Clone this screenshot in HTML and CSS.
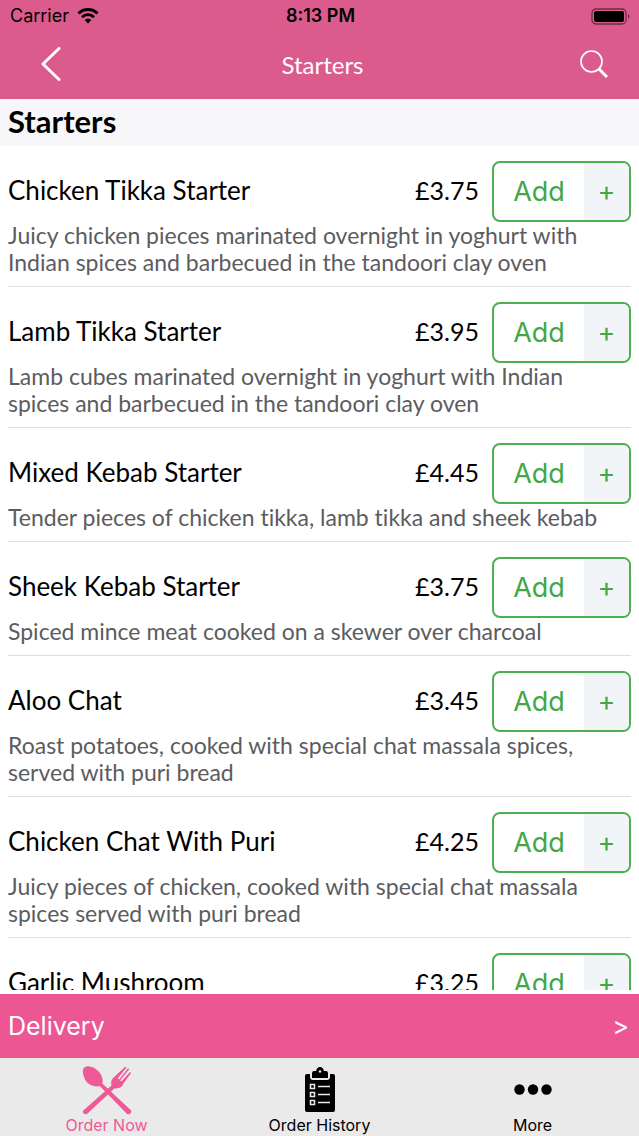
FILE: index.html
```html
<!DOCTYPE html>
<html lang="en">
<head>
  <meta charset="UTF-8">
  <meta name="viewport" content="width=device-width, initial-scale=1.0">
  <title>Starters</title>
  <link rel="stylesheet" href="styles.css">
</head>
<body>
  <header class="top">
    <div class="status">
      <div class="carrier">
        <span>Carrier</span>
        <svg width="22" height="16" viewBox="0 0 22 16">
          <path d="M1.500 5.500a13.500 13.500 0 0 1 19 0" fill="none" stroke="#000" stroke-width="3"/>
          <path d="M5 9.200a8.500 8.500 0 0 1 12 0" fill="none" stroke="#000" stroke-width="2.800"/>
          <path d="M7.700 12a4.700 4.700 0 0 1 6.600 0L11 15.500z"/>
        </svg>
      </div>
      <span class="time">8:13 PM</span>
      <svg class="battery" width="40" height="17" viewBox="0 0 40 17">
        <rect x="1" y="1" width="34" height="15" rx="4" fill="none" stroke="#000" stroke-opacity=".5" stroke-width="1.300"/>
        <rect x="3" y="3" width="30" height="11" rx="2"/>
        <path d="M37 6q3 2.500 0 5z" fill-opacity=".5"/>
      </svg>
    </div>
    <nav class="nav">
      <button class="nav-button" aria-label="Back">
        <svg width="20" height="34" viewBox="0 0 20 34"><path d="M18 1.500 2 17l16 15.500" fill="none" stroke="#fff" stroke-width="3" stroke-linecap="round" stroke-linejoin="round"/></svg>
      </button>
      <span class="nav-title">Starters</span>
      <button class="nav-button" aria-label="Search">
        <svg width="28" height="28" viewBox="0 0 28 28" fill="none" stroke="#fff">
          <circle cx="11.500" cy="11.500" r="10.500" stroke-width="1.700"/>
          <path d="m18.500 18.500 8.500 8.500" stroke-width="3"/>
        </svg>
      </button>
    </nav>
  </header>

  <main class="menu">
    <h1>Starters</h1>
    <ul class="items">
      <li>
        <div class="row">
          <h2>Chicken Tikka Starter</h2>
          <span class="price">£3.75</span>
          <button class="add"><span>Add</span><span class="plus">+</span></button>
        </div>
        <p>Juicy chicken pieces marinated overnight in yoghurt with<br>Indian spices and barbecued in the tandoori clay oven</p>
      </li>
      <li>
        <div class="row">
          <h2>Lamb Tikka Starter</h2>
          <span class="price">£3.95</span>
          <button class="add"><span>Add</span><span class="plus">+</span></button>
        </div>
        <p>Lamb cubes marinated overnight in yoghurt with Indian<br>spices and barbecued in the tandoori clay oven</p>
      </li>
      <li>
        <div class="row">
          <h2>Mixed Kebab Starter</h2>
          <span class="price">£4.45</span>
          <button class="add"><span>Add</span><span class="plus">+</span></button>
        </div>
        <p>Tender pieces of chicken tikka, lamb tikka and sheek kebab</p>
      </li>
      <li>
        <div class="row">
          <h2>Sheek Kebab Starter</h2>
          <span class="price">£3.75</span>
          <button class="add"><span>Add</span><span class="plus">+</span></button>
        </div>
        <p>Spiced mince meat cooked on a skewer over charcoal</p>
      </li>
      <li>
        <div class="row">
          <h2>Aloo Chat</h2>
          <span class="price">£3.45</span>
          <button class="add"><span>Add</span><span class="plus">+</span></button>
        </div>
        <p>Roast potatoes, cooked with special chat massala spices,<br>served with puri bread</p>
      </li>
      <li>
        <div class="row">
          <h2>Chicken Chat With Puri</h2>
          <span class="price">£4.25</span>
          <button class="add"><span>Add</span><span class="plus">+</span></button>
        </div>
        <p>Juicy pieces of chicken, cooked with special chat massala<br>spices served with puri bread</p>
      </li>
      <li>
        <div class="row">
          <h2>Garlic Mushroom</h2>
          <span class="price">£3.25</span>
          <button class="add"><span>Add</span><span class="plus">+</span></button>
        </div>
      </li>
    </ul>
  </main>

  <button class="delivery"><span>Delivery</span><span class="arrow">&gt;</span></button>

  <nav class="tabs">
    <a href="#" class="active">
      <svg width="50" height="50" viewBox="0 0 50 50" fill="currentColor">
        <path d="M1 5C1.500 1 6 .5 10 2c6.500 2.500 10.500 8 10.700 14l-.4 2.600L48.700 45c2 2.500-1.500 5.500-3.900 3.700L17.800 21C12 22.500 5 19.500 2.500 13.500 1.500 10.500.5 8 1 5z"/>
        <path d="M1.300 45.500 29.500 20.500c-.8-3-.2-5.800 2-8L43.500 1.500l1 1-8.600 10.800 1.200 1.100L46 3.200l1.200 1.100-9 11 1.200 1.100L48 7l1.100 1.100-8 10.800-.6 1.800c-2.400 2.500-5.200 3-7.800 2.600L5.200 48.800c-2.400 1.700-5.400-1.200-3.900-3.300z"/>
      </svg>
      <span>Order Now</span>
    </a>
    <a href="#">
      <svg width="32" height="50" viewBox="0 0 32 50">
        <path d="M3 9h3v3q0 3 3 3h14q3 0 3-3V9h3q2 0 2 2v34q0 2-2 2H3q-2 0-2-2V11q0-2 2-2z"/>
        <path d="M8 8q0-2 2-2h2q1-4 4-4t4 4h2q2 0 2 2v5H8z"/>
        <circle cx="16" cy="6.500" r="1.200" fill="#ebeaeb"/>
        <g fill="none" stroke="#ebeaeb" stroke-width="1.500">
          <path d="M6.500 19.500h4v4h-4zM6.500 27.500h4v4h-4zM6.500 35.500h4v4h-4z"/>
          <path d="M14 21.500h12M14 29.500h12M14 37.500h12"/>
        </g>
      </svg>
      <span>Order History</span>
    </a>
    <a href="#">
      <svg width="40" height="50" viewBox="0 0 40 50"><circle cx="6.500" cy="24.500" r="5.200"/><circle cx="20" cy="24.500" r="5.200"/><circle cx="33.500" cy="24.500" r="5.200"/></svg>
      <span>More</span>
    </a>
  </nav>
</body>
</html>
```
FILE: styles.css
```css
* {
  box-sizing: border-box;
}

body {
  margin: 0;
  height: 100vh;
  display: flex;
  flex-direction: column;
  background: #fff;
  color: #000;
  font-family: Lato, "Open Sans", sans-serif;
  font-variant-ligatures: none;
}

button {
  border: none;
  background: none;
  padding: 0;
  font-family: inherit;
  color: inherit;
  cursor: pointer;
}

.top {
  background: #da5b8c;
}

.status {
  display: grid;
  grid-template-columns: 1fr auto 1fr;
  align-items: center;
  height: 32px;
  padding: 0 8px 0 10px;
  font: 18px/32px Inter, sans-serif;
}

.carrier {
  display: flex;
  align-items: center;
  gap: 8px;
}

.time {
  font-weight: 600;
}

.battery {
  justify-self: end;
}

.nav {
  display: flex;
  justify-content: space-between;
  align-items: center;
  height: 67px;
  padding: 0 21px 3px 27px;
  color: #fff;
}

.nav-button {
  width: 48px;
  height: 48px;
  display: flex;
  align-items: center;
  justify-content: center;
}

.nav-title {
  font-size: 24px;
}

.menu {
  flex: 1;
  min-height: 0;
  margin-bottom: 4px;
  overflow: hidden;
}

h1 {
  margin: 0;
  height: 47px;
  padding: 0 8px;
  background: #f7f7fa;
  font-size: 31px;
  line-height: 44px;
  font-weight: 700;
}

.items {
  list-style: none;
  margin: 0;
  padding: 0 8px;
}

.items li {
  padding: 15px 0 9px;
  border-bottom: 1px solid #dedee0;
}

.row {
  display: flex;
  align-items: center;
}

h2,
.price {
  padding-bottom: 4px;
  line-height: 32px;
}

h2 {
  flex: 1;
  margin: 0;
  font-size: 26px;
  font-weight: 400;
}

.price {
  margin-right: 13px;
  font-size: 25px;
}

.add {
  width: 139px;
  height: 61px;
  display: flex;
  border: 2px solid #4caf50;
  border-radius: 8px;
  overflow: hidden;
  color: #43a745;
  font: 27px/58px Inter, sans-serif;
}

.add span {
  flex: 1;
}

.add .plus {
  flex: 0 0 45px;
  background: #f2f5f8;
}

.items p {
  margin: 0;
  padding-bottom: 1px;
  color: #5c5c60;
  font-size: 23px;
  line-height: 27px;
}

.delivery {
  display: flex;
  justify-content: space-between;
  align-items: center;
  height: 64px;
  padding: 0 10px 0 8px;
  background: #ec5693;
  color: #fff;
  font: 25px Inter, sans-serif;
}

.tabs {
  display: grid;
  grid-template-columns: repeat(3, 1fr);
  height: 78px;
  padding-top: 7px;
  background: #ebeaeb;
}

.tabs a {
  display: flex;
  flex-direction: column;
  align-items: center;
  color: #000;
  font: 16px/20px Inter, sans-serif;
  text-decoration: none;
}

.tabs .active {
  color: #ed5a96;
}
```
